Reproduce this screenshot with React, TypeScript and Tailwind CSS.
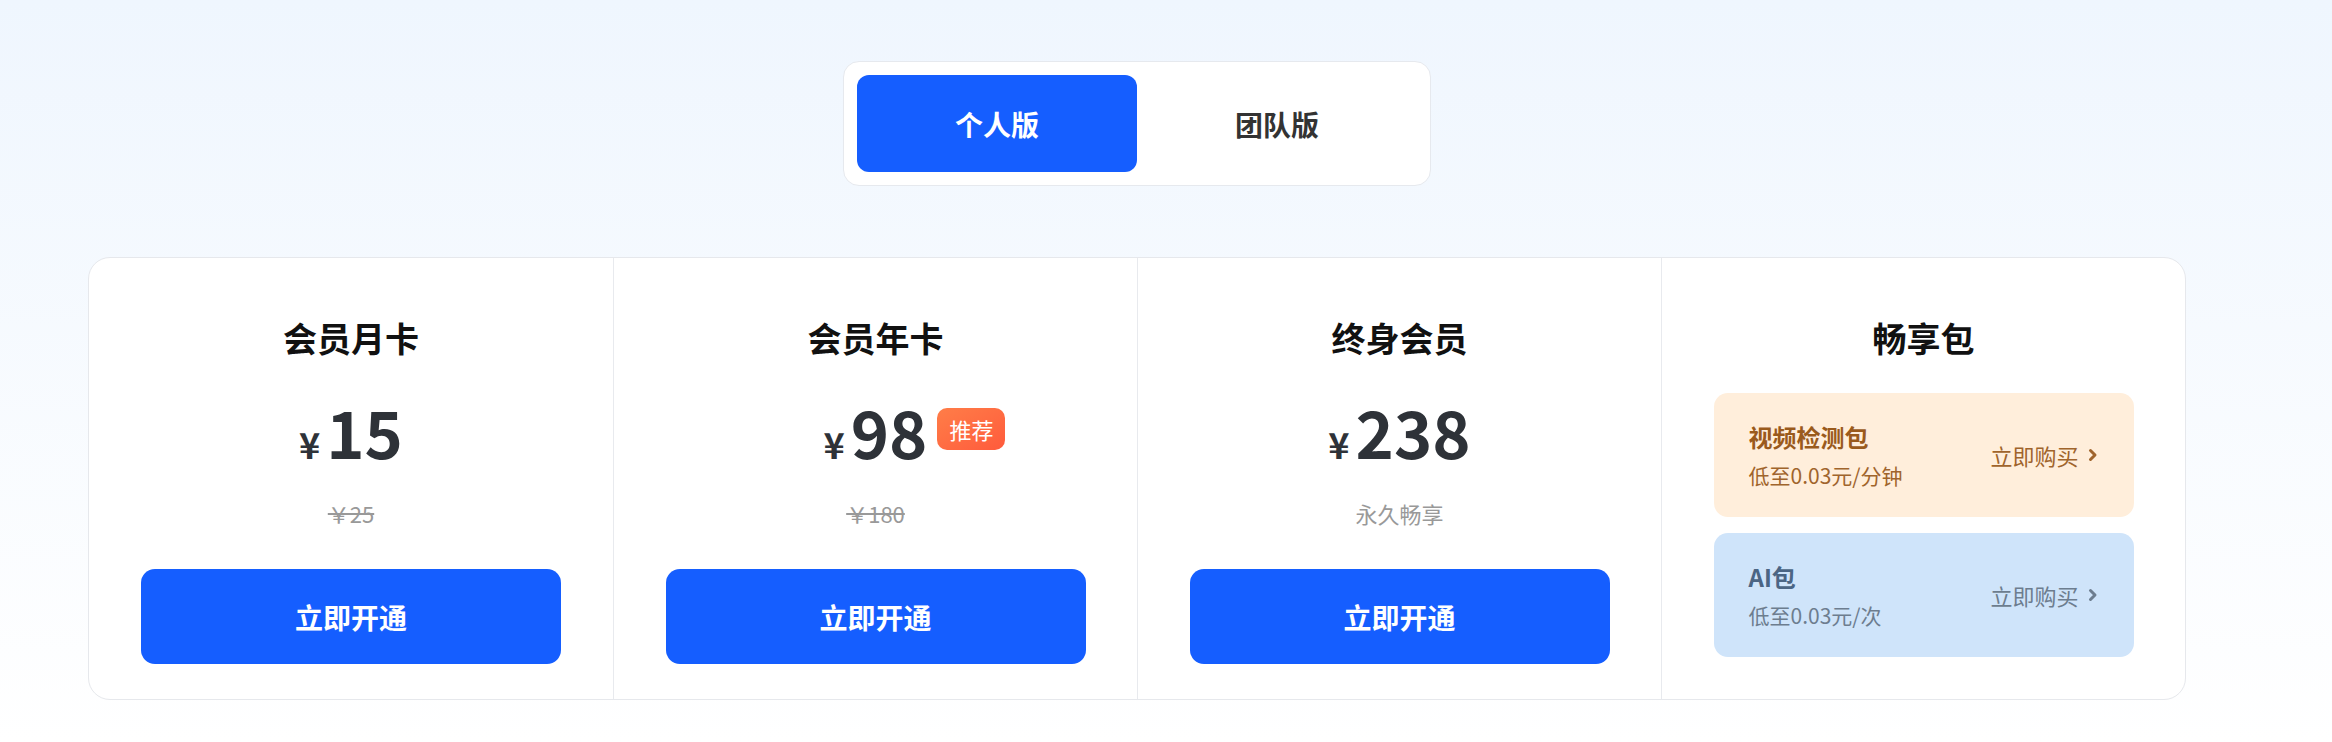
const font = { fontFamily: '"Noto Sans CJK SC", "Noto Sans", sans-serif' }

type Plan = {
  title: string
  price: string
  sub: string
  strike: boolean
  badge?: string
}

const plans: Plan[] = [
  { title: "会员月卡", price: "15", sub: "￥25", strike: true },
  { title: "会员年卡", price: "98", sub: "￥180", strike: true, badge: "推荐" },
  { title: "终身会员", price: "238", sub: "永久畅享", strike: false },
]

function PlanColumn({ plan, first }: { plan: Plan; first: boolean }) {
  return (
    <div className={`flex flex-col items-center pt-[54px] ${first ? "" : "border-l border-[#e8eaee]"}`}>
      <div className="text-[34px] leading-[51px] font-bold text-[#111111]">{plan.title}</div>
      <div className="relative mt-[36px] flex items-baseline gap-[6px] text-[#2e3238]">
        <span className="text-[36px] leading-none font-bold">¥</span>
        <span className="text-[65px] leading-none font-bold">{plan.price}</span>
        {plan.badge && (
          <span className="absolute left-full top-[9px] ml-[10px] flex h-[42px] items-center rounded-[10px] bg-linear-to-br from-[#ff7d48] to-[#ff5a3c] px-[12px] text-[22px] leading-none whitespace-nowrap text-white">
            {plan.badge}
          </span>
        )}
      </div>
      <div
        className={`mt-[33px] text-[22px] leading-[33px] text-[#999999] ${plan.strike ? "line-through" : ""}`}
      >
        {plan.sub}
      </div>
      <button className="mt-[39px] flex h-[95px] w-[420px] items-center justify-center rounded-[14px] bg-[#155eff] text-[28px] font-bold text-white">
        立即开通
      </button>
    </div>
  )
}

function Chevron() {
  return (
    <svg width="10" height="14" viewBox="0 0 10 14" fill="none">
      <path d="M2.5 2.5 L7 7 L2.5 11.5" stroke="currentColor" strokeWidth="3" strokeLinecap="round" strokeLinejoin="round" />
    </svg>
  )
}

function PackBox({
  title,
  sub,
  bg,
  titleColor,
  textColor,
}: {
  title: string
  sub: string
  bg: string
  titleColor: string
  textColor: string
}) {
  return (
    <div className={`flex h-[124px] w-[420px] items-center justify-between rounded-[14px] pl-[35px] pr-[36px] ${bg}`}>
      <div className="flex flex-col">
        <span className={`text-[24px] leading-[34px] font-bold ${titleColor}`}>{title}</span>
        <span className={`mt-[6px] text-[21px] leading-[30px] ${textColor}`}>{sub}</span>
      </div>
      <div className={`flex items-center gap-[9px] text-[22px] ${textColor}`}>
        <span>立即购买</span>
        <Chevron />
      </div>
    </div>
  )
}

export default function App() {
  return (
    <div
      className="flex h-[742px] w-full flex-col items-center bg-linear-to-b from-[#eff6fe] to-[#ffffff] pr-[58px]"
      style={font}
    >
      {/* Version toggle */}
      <div className="mt-[61px] flex w-[588px] rounded-[16px] border border-[#e6e9ee] bg-white p-[13px]">
        <button className="flex h-[97px] flex-1 items-center justify-center rounded-[12px] bg-[#155eff] text-[28px] font-bold text-white">
          个人版
        </button>
        <button className="flex h-[97px] flex-1 items-center justify-center rounded-[12px] text-[28px] font-bold text-[#333333]">
          团队版
        </button>
      </div>

      {/* Plans */}
      <div className="mt-[71px] grid h-[443px] w-[2098px] grid-cols-4 rounded-[22px] border border-[#e6e8ec] bg-white">
        {plans.map((p, i) => (
          <PlanColumn key={p.title} plan={p} first={i === 0} />
        ))}
        <div className="flex flex-col items-center border-l border-[#e8eaee] pt-[54px]">
          <div className="text-[34px] leading-[51px] font-bold text-[#111111]">畅享包</div>
          <div className="mt-[30px] flex flex-col gap-[16px]">
            <PackBox
              title="视频检测包"
              sub="低至0.03元/分钟"
              bg="bg-[#ffeedb]"
              titleColor="text-[#9a5a1c]"
              textColor="text-[#a0642c]"
            />
            <PackBox
              title="AI包"
              sub="低至0.03元/次"
              bg="bg-[#cfe4fa]"
              titleColor="text-[#4b6584]"
              textColor="text-[#6d7d8f]"
            />
          </div>
        </div>
      </div>
    </div>
  )
}
